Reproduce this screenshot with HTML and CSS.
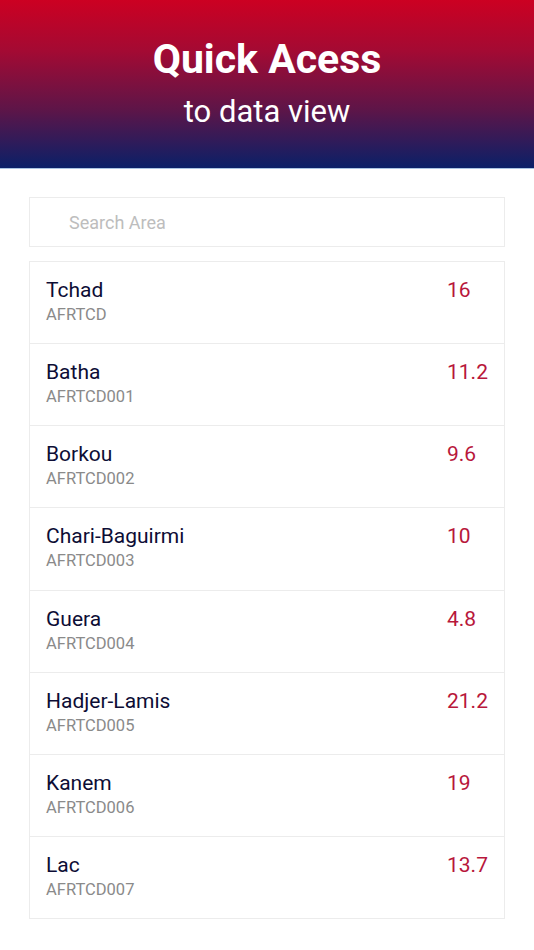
FILE: index.html
```html
<!DOCTYPE html>
<html lang="en">
<head>
    <meta charset="UTF-8">
    <meta name="viewport" content="width=device-width, initial-scale=1.0">
    <title>Quick Acess</title>
    <link rel="stylesheet" href="styles.css">
</head>
<body>
    <header class="hero">
        <h1>Quick Acess</h1>
        <p>to data view</p>
    </header>
    <main class="content">
        <input class="search" type="text" placeholder="Search Area">
        <ul class="area-list">
            <li class="area">
                <div class="area-info"><span class="area-name">Tchad</span><span class="area-code">AFRTCD</span></div>
                <span class="area-value">16</span>
            </li>
            <li class="area">
                <div class="area-info"><span class="area-name">Batha</span><span class="area-code">AFRTCD001</span></div>
                <span class="area-value">11.2</span>
            </li>
            <li class="area">
                <div class="area-info"><span class="area-name">Borkou</span><span class="area-code">AFRTCD002</span></div>
                <span class="area-value">9.6</span>
            </li>
            <li class="area">
                <div class="area-info"><span class="area-name">Chari-Baguirmi</span><span class="area-code">AFRTCD003</span></div>
                <span class="area-value">10</span>
            </li>
            <li class="area">
                <div class="area-info"><span class="area-name">Guera</span><span class="area-code">AFRTCD004</span></div>
                <span class="area-value">4.8</span>
            </li>
            <li class="area">
                <div class="area-info"><span class="area-name">Hadjer-Lamis</span><span class="area-code">AFRTCD005</span></div>
                <span class="area-value">21.2</span>
            </li>
            <li class="area">
                <div class="area-info"><span class="area-name">Kanem</span><span class="area-code">AFRTCD006</span></div>
                <span class="area-value">19</span>
            </li>
            <li class="area">
                <div class="area-info"><span class="area-name">Lac</span><span class="area-code">AFRTCD007</span></div>
                <span class="area-value">13.7</span>
            </li>
        </ul>
    </main>
</body>
</html>
```

FILE: styles.css
```css
body {
    font-family: 'Roboto', sans-serif;
    background-color: #ffffff;
    margin: 0;
}
.hero {
    height: 169px;
    background: linear-gradient(to bottom, #cc0022 0%, #a40a33 30%, #5e1548 65%, #0a2068 100%);
    border-bottom: 1px solid #a9c4e2;
    color: white;
    text-align: center;
    display: flex;
    flex-direction: column;
    align-items: center;
    box-sizing: border-box;
    padding-top: 35px;
}
.hero h1 {
    margin: 0;
    font-size: 41px;
    line-height: 48px;
    font-weight: 700;
}
.hero p {
    margin: 11px 0 0;
    font-size: 31px;
    line-height: 36px;
    font-weight: 400;
}
.content {
    padding: 28px 29px 0;
}
.search {
    display: block;
    box-sizing: border-box;
    width: 100%;
    height: 50px;
    border: 1px solid #ececec;
    padding: 0 39px;
    font-family: 'Roboto', sans-serif;
    font-size: 18px;
    color: #333;
    outline: none;
}
.search::placeholder {
    color: #bdbdbd;
}
.area-list {
    list-style: none;
    margin: 14px 0 0;
    padding: 0;
    border: 1px solid #ececec;
}
.area {
    display: flex;
    height: 82.15px;
    box-sizing: border-box;
    padding: 15px 16px 0 16px;
    border-top: 1px solid #ececec;
}
.area:first-child {
    border-top: none;
    height: 81.15px;
}
.area-info {
    flex: 1;
    display: flex;
    flex-direction: column;
}
.area-name {
    font-size: 21px;
    line-height: 26px;
    color: #0d0d35;
}
.area-code {
    font-size: 16.5px;
    line-height: 24px;
    color: #8a8a8a;
}
.area-value {
    width: 41px;
    font-size: 21px;
    line-height: 26px;
    color: #b8173b;
}
```
